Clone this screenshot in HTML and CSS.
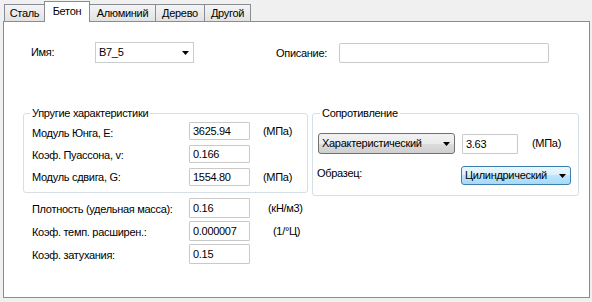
FILE: index.html
```html
<!DOCTYPE html>
<html lang="ru">
<head>
  <meta charset="UTF-8" />
  <title>Материалы</title>
  <link rel="stylesheet" href="styles.css">
</head>
<body>

  <div class="tabs">
    <div class="tab t-steel">Сталь</div>
    <div class="tab active t-concrete">Бетон</div>
    <div class="tab t-alu">Алюминий</div>
    <div class="tab t-wood">Дерево</div>
    <div class="tab t-other">Другой</div>
  </div>

  <div class="panel">
    <div class="top-row">
      <span class="name-lbl">Имя:</span>
      <div class="combo flat name-combo">
        <span>B7_5</span>
        <svg width="7" height="4" viewBox="0 0 7 4"><path d="M0 0h7L3.5 4z"/></svg>
      </div>
      <span class="desc-lbl">Описание:</span>
      <input class="field desc-field" type="text" value="">
    </div>

    <div class="groups">
      <fieldset class="group elastic">
        <legend>Упругие характеристики</legend>
        <div class="grow">
          <span class="row-lbl low2">Модуль Юнга, E:</span>
          <input class="field num" type="text" value="3625.94">
          <span class="unit">(МПа)</span>
        </div>
        <div class="grow">
          <span class="row-lbl low1">Коэф. Пуассона, v:</span>
          <input class="field num" type="text" value="0.166">
        </div>
        <div class="grow">
          <span class="row-lbl">Модуль сдвига, G:</span>
          <input class="field num" type="text" value="1554.80">
          <span class="unit">(МПа)</span>
        </div>
      </fieldset>

      <fieldset class="group strength">
        <legend>Сопротивление</legend>
        <div class="srow">
          <div class="combo btn char-combo">
            <span>Характеристический</span>
            <svg width="7" height="4" viewBox="0 0 7 4"><path d="M0 0h7L3.5 4z"/></svg>
          </div>
          <input class="field str-field" type="text" value="3.63">
          <span class="unit">(МПа)</span>
        </div>
        <div class="srow sample-row">
          <span class="sample-lbl">Образец:</span>
          <div class="combo hot sample-combo">
            <span>Цилиндрический</span>
            <svg width="7" height="4" viewBox="0 0 7 4"><path d="M0 0h7L3.5 4z"/></svg>
          </div>
        </div>
      </fieldset>
    </div>

    <div class="props">
      <div class="prow">
        <span class="row-lbl">Плотность (удельная масса):</span>
        <input class="field num" type="text" value="0.16">
        <span class="unit u-density">(кН/м3)</span>
      </div>
      <div class="prow">
        <span class="row-lbl">Коэф. темп. расширен.:</span>
        <input class="field num" type="text" value="0.000007">
        <span class="unit u-exp">(1/°Ц)</span>
      </div>
      <div class="prow">
        <span class="row-lbl">Коэф. затухания:</span>
        <input class="field num" type="text" value="0.15">
      </div>
    </div>
  </div>

</body>
</html>
```

FILE: styles.css
```css
body{margin:0;width:592px;height:302px;overflow:hidden;background:#f0f0f0;color:#000;font:11px/13px "Liberation Sans", Arial, sans-serif;letter-spacing:-0.3px;}

/* вкладки */
.tabs{display:flex;align-items:flex-end;height:21px;padding-left:4px;}
.tab{box-sizing:border-box;height:17px;padding-top:2px;margin-right:-1px;border:1px solid #898c95;border-bottom:none;background:linear-gradient(#f4f4f4,#e2e2e2);text-align:center;}
.tab.active{position:relative;z-index:1;height:21px;padding-top:3px;margin-bottom:-1px;background:#fff;}
.t-steel{width:41px;}
.t-concrete{width:46px;}
.t-alu{width:67px;}
.t-wood{width:50px;}
.t-other{width:47px;}

.panel{box-sizing:border-box;width:587px;height:277px;margin-left:3px;border:1px solid #898c95;background:#fff;}

/* поля */
.field{box-sizing:border-box;margin:0;padding:0 3px;border:1px solid #c9c9c9;border-radius:1px;background:#fff;color:#000;font:inherit;letter-spacing:inherit;outline:none;}
.num{width:61px;height:18px;}
.unit{margin-left:13px;}

.combo{box-sizing:border-box;display:flex;align-items:center;justify-content:space-between;padding:0 4px 0 3px;}
.combo svg{flex:none;}
.flat{border:1px solid #cccccc;background:#fff;}
.btn{border:1px solid #707070;border-radius:3px;background:linear-gradient(#f2f2f2 0%,#ebebeb 50%,#dddddd 50%,#cfcfcf 100%);}
.hot{border:1px solid #3c7fb1;border-radius:3px;background:linear-gradient(#eaf6fd 0%,#d9f0fc 50%,#bee6fd 50%,#a7d9f5 100%);}

/* верхняя строка */
.top-row{display:flex;align-items:center;margin-top:20px;padding-left:27px;}
.name-lbl{width:64px;}
.name-combo{width:99px;height:21px;}
.desc-lbl{width:63px;margin-left:82px;padding-top:2px;}
.desc-field{width:210px;height:20px;border-radius:2px;}

/* группы */
.groups{display:flex;align-items:flex-start;gap:4px;margin-top:44px;padding-left:19px;}
.group{box-sizing:border-box;min-inline-size:0;margin:0;border:1px solid #d5dfe5;border-radius:3px;}
.group legend{padding:0 2px;line-height:13px;}
.elastic{width:285px;padding:2px 0 6px 8px;}
.elastic legend{margin-left:-2px;}
.strength{width:267px;padding:13px 0 10px 5px;}
.strength legend{margin-left:2px;}

.grow{display:flex;align-items:center;height:18px;margin-bottom:5px;}
.grow:last-child{margin-bottom:0;}
.row-lbl{width:157px;}
.low2{padding-top:5px;}
.low1{padding-top:2px;}

.srow{display:flex;align-items:center;}
.char-combo{width:137px;height:21px;}
.str-field{width:56px;height:20px;margin-left:7px;}
.srow .unit{margin-left:14px;}
.sample-row{margin-top:12px;}
.sample-lbl{width:144px;margin-top:-4px;margin-left:-1px;}
.sample-combo{width:110px;height:19px;}

/* свойства */
.props{margin-top:2px;padding-left:28px;}
.prow{display:flex;align-items:center;height:20px;margin-bottom:3px;}
.prow .num{height:20px;}
.prow .row-lbl{padding-top:2px;}
.u-density{margin-left:18px;}
.u-exp{margin-left:23px;}
```
